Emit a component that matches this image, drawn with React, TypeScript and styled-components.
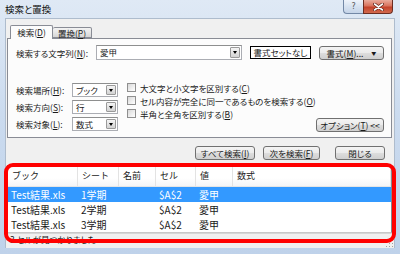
import React from 'react';
import styled, { createGlobalStyle } from 'styled-components';

const GlobalStyle = createGlobalStyle`
  html, body {
    margin: 0;
    padding: 0;
    background: #ffffff;
  }
  body {
    font-family: "Noto Sans CJK JP", "Noto Sans", sans-serif;
    font-size: 8.5px;
    font-feature-settings: "palt";
    color: #1a1a1a;
  }
`;

const Frame = styled.div`
  position: relative;
  width: 400px;
  height: 254px;
  display: flex;
  flex-direction: column;
  background: linear-gradient(to bottom, #dfe9f5 0%, #cbdbef 45%, #bfd2ea 100%);
  overflow: hidden;
`;

const TitleBar = styled.div`
  height: 18px;
  flex: none;
  display: flex;
  align-items: flex-start;
`;

const Title = styled.div`
  padding-left: 5px;
  line-height: 19px;
  font-size: 9.5px;
  color: #111;
`;

const CaptionButtons = styled.div`
  margin-left: auto;
  margin-right: 7px;
  display: flex;
`;

const HelpButton = styled.div`
  width: 20px;
  height: 14px;
  box-sizing: border-box;
  border: 1px solid #7388a6;
  border-top: none;
  border-right: none;
  border-radius: 0 0 0 4px;
  background: linear-gradient(to bottom, #eef3fa 0%, #d7e2f0 50%, #c5d4e8 100%);
  color: #555;
  font-family: "DejaVu Sans", sans-serif;
  font-size: 8px;
  line-height: 13px;
  text-align: center;
`;

const CloseButton = styled.div`
  width: 30px;
  height: 14px;
  box-sizing: border-box;
  border: 1px solid #6b2d22;
  border-top: none;
  border-radius: 0 0 4px 0;
  background: linear-gradient(to bottom, #e9ab9c 0%, #d9735d 45%, #c4432b 55%, #d26a4f 100%);
  display: flex;
  align-items: center;
  justify-content: center;
`;

const Client = styled.div`
  flex: 1;
  margin: 0 5px 6px 5px;
  background: #f0f0f0;
  border: 1px solid #aebccd;
  border-bottom: none;
  padding: 6px 2px 0 1px;
  display: flex;
  flex-direction: column;
  min-height: 0;
`;

const TabStrip = styled.div`
  height: 13px;
  flex: none;
  display: flex;
  align-items: flex-end;
  padding-left: 3px;
`;

const Tab = styled.div<{ $active?: boolean }>`
  position: relative;
  z-index: ${(p) => (p.$active ? 2 : 1)};
  box-sizing: border-box;
  width: ${(p) => (p.$active ? 43 : 39)}px;
  height: ${(p) => (p.$active ? 14 : 11)}px;
  margin-bottom: ${(p) => (p.$active ? -1 : 0)}px;
  border: 1px solid #898c95;
  border-bottom: ${(p) => (p.$active ? 'none' : '1px solid #898c95')};
  border-left: ${(p) => (p.$active ? '1px solid #898c95' : 'none')};
  border-radius: 2px 2px 0 0;
  background: ${(p) =>
    p.$active ? '#fcfcfc' : 'linear-gradient(to bottom, #f3f3f3 0%, #e6e6e6 50%, #d6d6d6 100%)'};
  text-align: center;
  line-height: ${(p) => (p.$active ? 13 : 10)}px;
`;

const Panel = styled.div`
  flex: none;
  box-sizing: border-box;
  height: 100px;
  border: 1px solid #898c95;
  background: #fcfcfc;
  padding: 6px 7px 0 8px;
  display: flex;
  flex-direction: column;
`;

const Row = styled.div`
  height: 15px;
  display: flex;
  align-items: center;
`;

const Label = styled.div<{ $width: number }>`
  width: ${(p) => p.$width}px;
  flex: none;
  white-space: nowrap;
`;

const Combo = styled.div<{ $width: number; $height: number }>`
  width: ${(p) => p.$width}px;
  height: ${(p) => p.$height}px;
  box-sizing: border-box;
  flex: none;
  display: flex;
  border: 1px solid #abadb3;
  border-top-color: #8e8f8f;
  background: #fff;
`;

const ComboText = styled.div`
  flex: 1;
  padding-left: 3px;
  line-height: 13px;
  white-space: nowrap;
`;

const ComboArrow = styled.div`
  width: 10px;
  box-sizing: border-box;
  margin: 1px;
  border: 1px solid #9a9a9a;
  border-radius: 1px;
  background: linear-gradient(to bottom, #f4f4f4 0%, #e4e4e4 50%, #d2d2d2 100%);
  display: flex;
  align-items: center;
  justify-content: center;
  &::after {
    content: '';
    border-left: 2.5px solid transparent;
    border-right: 2.5px solid transparent;
    border-top: 3px solid #000;
  }
`;

const FormatPreview = styled.div`
  margin-left: 8px;
  width: 62px;
  height: 13px;
  box-sizing: border-box;
  border: 1px solid #000;
  background: #fff;
  text-align: center;
  line-height: 11px;
  white-space: nowrap;
  overflow: hidden;
`;

const Button = styled.div<{ $width: number; $gap?: number }>`
  width: ${(p) => p.$width}px;
  height: 14px;
  flex: none;
  box-sizing: border-box;
  margin-left: ${(p) => p.$gap ?? 0}px;
  border: 1px solid #707070;
  border-radius: 3px;
  background: linear-gradient(to bottom, #f4f4f4 0%, #ebebeb 48%, #dddddd 52%, #cfcfcf 100%);
  display: flex;
  align-items: center;
  justify-content: center;
  white-space: nowrap;
  line-height: 12px;
  overflow: hidden;
`;

const SplitMark = styled.span`
  margin-left: 8px;
  font-size: 5px;
`;

const Lower = styled.div`
  margin-top: 23px;
  display: flex;
  align-items: flex-start;
`;

const SelectGrid = styled.div`
  display: grid;
  grid-template-columns: 56px 46px;
  grid-auto-rows: 14px;
  row-gap: 3px;
  align-items: center;
`;

const CheckList = styled.div`
  margin-left: 9px;
  margin-top: -2px;
  display: flex;
  flex-direction: column;
`;

const CheckRow = styled.div`
  height: 13px;
  display: flex;
  align-items: center;
  white-space: nowrap;
`;

const CheckBox = styled.span`
  width: 9px;
  height: 9px;
  box-sizing: border-box;
  margin-right: 4px;
  border: 1px solid #8f8f8f;
  background: linear-gradient(135deg, #d8d8d8 0%, #f4f4f4 70%, #ffffff 100%);
`;

const OptionButton = styled(Button)`
  margin-left: auto;
  margin-top: 35px;
`;

const ActionRow = styled.div`
  margin-top: 8px;
  padding-right: 7px;
  display: flex;
  justify-content: flex-end;
  flex: none;
`;

const ResultList = styled.div`
  margin-top: 5px;
  flex: 1;
  background: #fff;
  border: 1px solid #828790;
  border-bottom-color: #c8c8c8;
  display: flex;
  flex-direction: column;
  font-feature-settings: normal;
`;

const Columns = styled.div<{ $header?: boolean; $selected?: boolean }>`
  display: grid;
  grid-template-columns: 70px 41px 37px 40px 37px 1fr;
  height: ${(p) => (p.$header ? 20 : 15)}px;
  align-items: center;
  background: ${(p) =>
    p.$header ? 'linear-gradient(to bottom, #ffffff 0%, #ffffff 60%, #f4f5f7 100%)' : p.$selected ? '#3399ff' : '#fff'};
  color: ${(p) => (p.$selected ? '#fff' : '#1a1a1a')};
  font-size: ${(p) => (p.$header ? 9 : 10)}px;
  border-bottom: ${(p) => (p.$header ? '1px solid #e5e5e5' : 'none')};
`;

const Cell = styled.div<{ $header?: boolean }>`
  padding-left: ${(p) => (p.$header ? 4 : 3)}px;
  white-space: nowrap;
  overflow: hidden;
  height: 100%;
  line-height: ${(p) => (p.$header ? 20 : 15)}px;
  border-right: ${(p) => (p.$header ? '1px solid #e3e3e3' : 'none')};
`;

const StatusBar = styled.div`
  height: 15px;
  flex: none;
  margin: 0 -2px 0 -1px;
  border-top: 1px solid #d6d6d6;
  padding-left: 4px;
  line-height: 11px;
  display: flex;
  justify-content: space-between;
`;

const Grip = styled.div`
  width: 8px;
  height: 8px;
  margin: 5px 1px 0 0;
  background-image: radial-gradient(circle, #a0a0a0 0.8px, transparent 1px);
  background-size: 3px 3px;
  clip-path: polygon(100% 0, 100% 100%, 0 100%);
`;

const Annotation = styled.div`
  position: absolute;
  left: 4px;
  top: 163px;
  width: 392px;
  height: 80px;
  box-sizing: border-box;
  border: 4px solid #ff0000;
  border-radius: 9px;
  z-index: 10;
  pointer-events: none;
`;

const results = [
  { book: 'Test結果.xls', sheet: '1学期', name: '', cell: '$A$2', value: '愛甲', formula: '' },
  { book: 'Test結果.xls', sheet: '2学期', name: '', cell: '$A$2', value: '愛甲', formula: '' },
  { book: 'Test結果.xls', sheet: '3学期', name: '', cell: '$A$2', value: '愛甲', formula: '' },
];

const headers = ['ブック', 'シート', '名前', 'セル', '値', '数式'];

const App: React.FC = () => {
  return (
    <>
      <GlobalStyle />
      <Frame>
        <TitleBar>
          <Title>検索と置換</Title>
          <CaptionButtons>
            <HelpButton>?</HelpButton>
            <CloseButton>
              <svg width="11" height="8" viewBox="0 0 11 8">
                <path d="M1.5 1 L9.5 7 M9.5 1 L1.5 7" stroke="#5a2015" strokeWidth="3" strokeLinecap="round" />
                <path d="M1.5 1 L9.5 7 M9.5 1 L1.5 7" stroke="#ffffff" strokeWidth="1.6" strokeLinecap="round" />
              </svg>
            </CloseButton>
          </CaptionButtons>
        </TitleBar>
        <Client>
          <TabStrip>
            <Tab $active>検索(<u>D</u>)</Tab>
            <Tab>置換(<u>P</u>)</Tab>
          </TabStrip>
          <Panel>
            <Row>
              <Label $width={80}>検索する文字列(<u>N</u>):</Label>
              <Combo $width={146} $height={15}>
                <ComboText>愛甲</ComboText>
                <ComboArrow />
              </Combo>
              <FormatPreview>書式セットなし</FormatPreview>
              <Button $width={65} $gap={8}>
                書式(<u>M</u>)...<SplitMark>▼</SplitMark>
              </Button>
            </Row>
            <Lower>
              <SelectGrid>
                <Label $width={56}>検索場所(<u>H</u>):</Label>
                <Combo $width={46} $height={14}>
                  <ComboText>ブック</ComboText>
                  <ComboArrow />
                </Combo>
                <Label $width={56}>検索方向(<u>S</u>):</Label>
                <Combo $width={46} $height={14}>
                  <ComboText>行</ComboText>
                  <ComboArrow />
                </Combo>
                <Label $width={56}>検索対象(<u>L</u>):</Label>
                <Combo $width={46} $height={14}>
                  <ComboText>数式</ComboText>
                  <ComboArrow />
                </Combo>
              </SelectGrid>
              <CheckList>
                <CheckRow><CheckBox />大文字と小文字を区別する(<u>C</u>)</CheckRow>
                <CheckRow><CheckBox />セル内容が完全に同一であるものを検索する(<u>O</u>)</CheckRow>
                <CheckRow><CheckBox />半角と全角を区別する(<u>B</u>)</CheckRow>
              </CheckList>
              <OptionButton $width={68}>オプション(<u>T</u>) &lt;&lt;</OptionButton>
            </Lower>
          </Panel>
          <ActionRow>
            <Button $width={60}>すべて検索(<u>I</u>)</Button>
            <Button $width={57} $gap={8}>次を検索(<u>F</u>)</Button>
            <Button $width={50} $gap={15}>閉じる</Button>
          </ActionRow>
          <ResultList>
            <Columns $header>
              {headers.map((h) => (
                <Cell $header key={h}>{h}</Cell>
              ))}
            </Columns>
            {results.map((r, i) => (
              <Columns key={r.sheet} $selected={i === 0}>
                <Cell>{r.book}</Cell>
                <Cell>{r.sheet}</Cell>
                <Cell>{r.name}</Cell>
                <Cell>{r.cell}</Cell>
                <Cell>{r.value}</Cell>
                <Cell>{r.formula}</Cell>
              </Columns>
            ))}
          </ResultList>
          <StatusBar>
            <span>3 セルが見つかりました</span>
            <Grip />
          </StatusBar>
        </Client>
        <Annotation />
      </Frame>
    </>
  );
};

export default App;
